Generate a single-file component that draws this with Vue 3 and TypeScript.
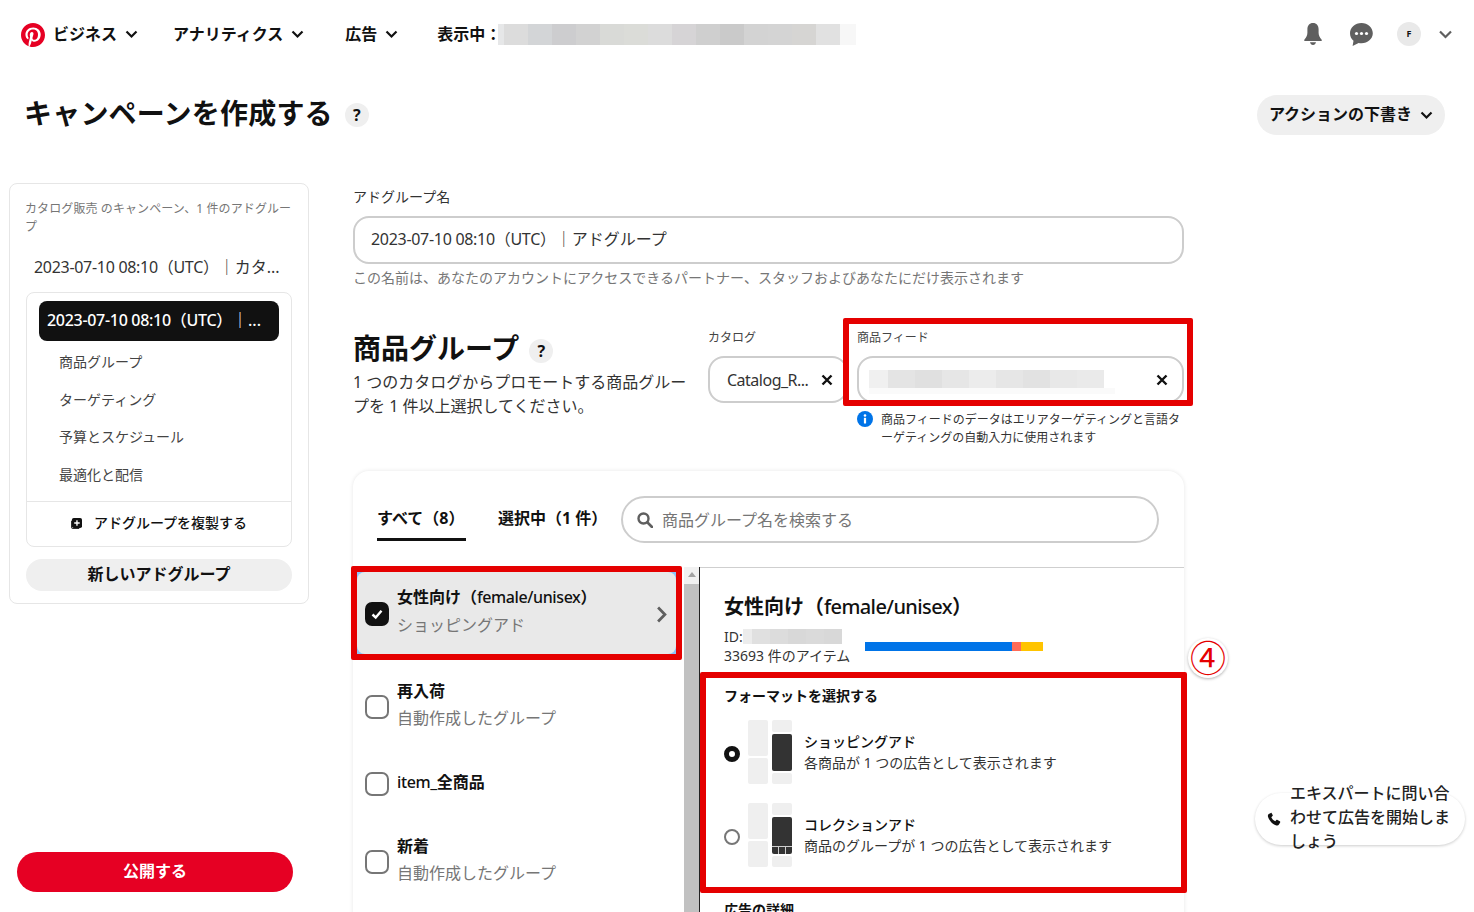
<script setup lang="ts">
const topBlur: string[] = ['#e6e7e8','#dcdcdc','#d3d5d7','#cdcdcf','#d2d2d2','#d9dad7','#dbdcd8','#dcdcdc','#d6d4d6','#cfcfcf','#cacaca','#d3d3d3','#d4d4d4','#d6d5d3','#e1e1e1','#f7f7f7']
const topWidths: number[] = [6,24,24,24,24,24,24,24,24,24,24,24,24,24,24,16]
const feedBlur: string[] = ['#f0f0f0','#e4e4e4','#e0e0e0','#e6e6e6','#ececec','#e6e6e6','#e2e2e2','#e8e8e8','#eaeaea']
const idBlur: string[] = ['#ececec','#e0e0e0','#dcdcdc','#d8d8d8','#dadada','#d8d8d8']
const navItems: { label: string; cls: string }[] = [
  { label: 'アナリティクス', cls: 'gap-a' },
  { label: '広告', cls: 'gap-b' }
]
const sideLinks: string[] = ['商品グループ', 'ターゲティング', '予算とスケジュール', '最適化と配信']
</script>

<template>
  <div class="page">
    <header class="topbar">
      <svg class="logo" viewBox="0 0 24 24"><path fill="#e60023" d="M0 12c0 5.123 3.211 9.497 7.73 11.218-.11-.937-.227-2.482.025-3.566.217-.932 1.401-5.938 1.401-5.938s-.357-.715-.357-1.774c0-1.66.962-2.9 2.161-2.9 1.02 0 1.512.765 1.512 1.682 0 1.025-.653 2.557-.99 3.978-.281 1.189.597 2.159 1.769 2.159 2.123 0 3.756-2.239 3.756-5.471 0-2.861-2.056-4.86-4.991-4.86-3.398 0-5.393 2.549-5.393 5.184 0 1.027.395 2.127.889 2.726a.36.36 0 0 1 .083.343c-.091.378-.293 1.189-.332 1.355-.053.218-.173.265-.4.159-1.492-.694-2.424-2.875-2.424-4.627 0-3.769 2.737-7.229 7.892-7.229 4.144 0 7.365 2.953 7.365 6.899 0 4.117-2.595 7.431-6.199 7.431-1.211 0-2.348-.63-2.738-1.373 0 0-.599 2.282-.744 2.84-.282 1.084-1.064 2.456-1.549 3.235C9.584 23.815 10.77 24 12 24c6.627 0 12-5.373 12-12S18.627 0 12 0 0 5.373 0 12"/></svg>
      <div class="nav-item">
        <span>ビジネス</span>
        <svg class="chev" viewBox="0 0 13 9"><path d="M1.5 1.5 6.5 6.5 11.5 1.5" /></svg>
      </div>
      <div v-for="n in navItems" :key="n.label" class="nav-item" :class="n.cls">
        <span>{{ n.label }}</span>
        <svg class="chev" viewBox="0 0 13 9"><path d="M1.5 1.5 6.5 6.5 11.5 1.5" /></svg>
      </div>
      <div class="nav-item gap-c"><span>表示中：</span></div>
      <div class="blur-top">
        <i v-for="(c, i) in topBlur" :key="i" :style="{ background: c, width: topWidths[i] + 'px' }"></i>
      </div>
      <div class="top-right">
        <svg class="ic" viewBox="0 0 24 24"><path fill="#5f5f5f" d="M12 1c-3.6 0-5.6 2.7-5.6 6.2v3.6c0 2.6-1 4.5-3.1 7V19h17.400v-1.200c-2.100-2.500-3.100-4.400-3.100-7V7.200C17.600 3.700 15.600 1 12 1ZM9 20.300c.3 1.600 1.500 2.700 3 2.700s2.700-1.100 3-2.700H9Z"/></svg>
        <svg class="ic" viewBox="0 0 24 24"><path fill="#5f5f5f" d="M12.500 1C6.100 1 1 5.600 1 11.300c0 3 1.300 5.600 3.500 7.500L3.600 24l6-3c.9.200 1.900.3 2.900.3 6.200 0 11.300-4.500 11.300-10S18.700 1 12.500 1Z"/><circle cx="7.500" cy="11.500" r="1.600" fill="#fff"/><circle cx="12.500" cy="11.500" r="1.600" fill="#fff"/><circle cx="17.500" cy="11.500" r="1.600" fill="#fff"/></svg>
        <div class="avatar">F</div>
        <svg class="chev grey" viewBox="0 0 13 9"><path d="M1 1.500 6.500 7 12 1.500" /></svg>
      </div>
    </header>

    <div class="title-row">
      <h1>キャンペーンを作成する</h1>
      <span class="help">?</span>
      <button class="draft">
        <span class="btn-label">アクションの下書き</span>
        <svg class="chev" viewBox="0 0 13 9"><path d="M1.500 1.500 6.500 6.500 11.500 1.500" /></svg>
      </button>
    </div>

    <div class="body">
      <aside class="side">
        <div class="side-card">
          <p class="side-caption">カタログ販売 のキャンペーン、1 件のアドグループ</p>
          <p class="side-campaign"><span class="date">2023-07-10 08:10（UTC）</span>｜カタ...</p>
          <div class="side-box">
            <div class="side-pill"><span class="date">2023-07-10 08:10（UTC）</span>｜...</div>
            <div class="side-links">
              <div v-for="s in sideLinks" :key="s" class="side-link">{{ s }}</div>
            </div>
            <div class="side-dup">
              <svg viewBox="0 0 12 12" class="dup-ic"><path fill="#111" d="M3 0h7a2 2 0 0 1 2 2v7a2 2 0 0 1-2 2H3a2 2 0 0 1-2-2V2a2 2 0 0 1 2-2Z"/><path fill="none" stroke="#111" stroke-width="1" d="M.5 3v7a1.500 1.500 0 0 0 1.500 1.500h7"/><path stroke="#fff" stroke-width="1.500" d="M6.500 2.500v6M3.500 5.500h6"/></svg>
              <span>アドグループを複製する</span>
            </div>
          </div>
          <button class="side-new"><span class="btn-label">新しいアドグループ</span></button>
        </div>
        <button class="publish"><span class="btn-label">公開する</span></button>
      </aside>

      <main class="main">
        <label class="lbl">アドグループ名</label>
        <div class="field name-field"><span class="date">2023-07-10 08:10（UTC）</span>｜アドグループ</div>
        <p class="hint">この名前は、あなたのアカウントにアクセスできるパートナー、スタッフおよびあなたにだけ表示されます</p>

        <section class="group-row">
          <div class="group-left">
            <div class="group-head">
              <h2>商品グループ</h2>
              <span class="help low">?</span>
            </div>
            <p class="group-desc">1 つのカタログからプロモートする商品グループを 1 件以上選択してください。</p>
          </div>
          <div class="catalog">
            <div class="mini-lbl">カタログ</div>
            <div class="field select">
              <span class="cat-name">Catalog_R...</span>
              <svg class="x" viewBox="0 0 12 12"><path d="M1.500 1.500 10.500 10.500M10.500 1.500 1.500 10.500"/></svg>
            </div>
          </div>
          <div class="feed">
            <div class="mini-lbl">商品フィード</div>
            <div class="field select">
              <div class="feed-blur">
                <div class="feed-blur-main"><i v-for="(c, i) in feedBlur" :key="i" :style="{ background: c }"></i></div>
                <div class="feed-blur-sub"></div>
              </div>
              <svg class="x" viewBox="0 0 12 12"><path d="M1.500 1.500 10.500 10.500M10.500 1.500 1.500 10.500"/></svg>
            </div>
            <div class="feed-note">
              <svg class="info" viewBox="0 0 16 16"><circle cx="8" cy="8" r="8" fill="#0074e8"/><circle cx="8" cy="4.500" r="1.300" fill="#fff"/><rect x="6.900" y="6.800" width="2.200" height="5.700" rx=".6" fill="#fff"/></svg>
              <p>商品フィードのデータはエリアターゲティングと言語ターゲティングの自動入力に使用されます</p>
            </div>
          </div>
        </section>

        <section class="card">
          <div class="tabs">
            <div class="tab active">すべて（8）</div>
            <div class="tab">選択中（1 件）</div>
            <div class="search">
              <svg viewBox="0 0 16 16" class="search-ic"><circle cx="6.500" cy="6.500" r="5" fill="none" stroke="#5f5f5f" stroke-width="2.400"/><path d="M10.500 10.500 15 15" stroke="#5f5f5f" stroke-width="2.600" stroke-linecap="round"/></svg>
              <span>商品グループ名を検索する</span>
            </div>
          </div>
          <div class="panes">
            <div class="left-pane">
              <div class="list">
                <div class="row-sel">
                  <div class="row-sel-in">
                    <span class="check on"><svg viewBox="0 0 14 14"><path d="M2.500 7.500 5.700 10.500 11.500 3.800" fill="none" stroke="#fff" stroke-width="2.400"/></svg></span>
                    <div class="row-text">
                      <div class="row-name">女性向け（<span class="reg">female/unisex</span>）</div>
                      <div class="row-sub">ショッピングアド</div>
                    </div>
                    <svg class="row-chev" viewBox="0 0 10 16"><path d="M1.800 1.500 8.200 8 1.800 14.500" fill="none" stroke="#5f5f5f" stroke-width="2.600"/></svg>
                  </div>
                </div>
                <div class="row first">
                  <span class="check"></span>
                  <div class="row-text">
                    <div class="row-name">再入荷</div>
                    <div class="row-sub">自動作成したグループ</div>
                  </div>
                </div>
                <div class="row">
                  <span class="check"></span>
                  <div class="row-text"><div class="row-name"><span class="reg">item_</span>全商品</div></div>
                </div>
                <div class="row">
                  <span class="check"></span>
                  <div class="row-text">
                    <div class="row-name">新着</div>
                    <div class="row-sub">自動作成したグループ</div>
                  </div>
                </div>
              </div>
              <div class="scroll">
                <div class="scroll-up"></div>
                <div class="scroll-thumb"></div>
              </div>
            </div>
            <div class="right-pane">
              <h3>女性向け（<span class="reg">female/unisex</span>）</h3>
              <div class="meta">
                <div class="meta-text">
                  <div class="meta-id">ID:<span class="id-blur"><i v-for="(c, i) in idBlur" :key="i" :style="{ background: c }"></i></span></div>
                  <div>33693 件のアイテム</div>
                </div>
                <div class="bar"><i class="b1"></i><i class="b2"></i><i class="b3"></i></div>
              </div>
              <h4>フォーマットを選択する</h4>
              <div class="opt">
                <span class="radio on"></span>
                <div class="thumb">
                  <div class="tcol"><i class="t36"></i><i class="t25"></i></div>
                  <div class="tcol"><i class="t12"></i><i class="dark"></i><i class="t10"></i></div>
                </div>
                <div class="opt-text">
                  <div class="opt-name">ショッピングアド</div>
                  <div>各商品が 1 つの広告として表示されます</div>
                </div>
              </div>
              <div class="opt second">
                <span class="radio"></span>
                <div class="thumb">
                  <div class="tcol"><i class="t36"></i><i class="t25"></i></div>
                  <div class="tcol"><i class="t12"></i><i class="dark coll"><b></b><b></b><b></b></i><i class="t10"></i></div>
                </div>
                <div class="opt-text">
                  <div class="opt-name">コレクションアド</div>
                  <div>商品のグループが 1 つの広告として表示されます</div>
                </div>
              </div>
              <h4 class="details">広告の詳細</h4>
            </div>
          </div>
        </section>
      </main>
    </div>

    <div class="mark m-feed"></div>
    <div class="mark m-row"></div>
    <div class="mark m-format"></div>
    <div class="num">④</div>

    <div class="expert">
      <svg class="phone" viewBox="0 0 24 24"><path fill="#111" d="M6.600 1.500 3 3.500C1.500 4.500 1 6.500 2 9c2.500 6.500 7 11 13 13.500 2.500 1 4.500.5 5.500-1l2-3.500c.4-.8.2-1.500-.5-2l-4-2.500c-.7-.4-1.400-.3-2 .3l-1.800 2c-3-1.300-5.500-4-6.800-7l2-1.800c.6-.6.7-1.300.3-2L7.800 1.500c-.3-.4-.8-.4-1.200 0Z"/></svg>
      <div class="expert-text">エキスパートに問い合わせて広告を開始しましょう</div>
    </div>
  </div>
</template>

<style>
html, body { margin: 0; padding: 0; background: #fff; }
</style>

<style scoped>
.page {
  position: relative;
  width: 1474px;
  height: 912px;
  overflow: hidden;
  background: #fff;
  color: #111;
  font-family: "Noto Sans", "Noto Sans CJK JP", sans-serif;
  font-size: 14px;
  line-height: 20px;
}
p, h1, h2, h3, h4 { margin: 0; }
i { display: block; }
button { font-family: inherit; border: 0; color: #111; padding: 0; }
.btn-label { display: block; margin-top: -5px; }
.date { letter-spacing: -.3px; }

.topbar { height: 68px; display: flex; align-items: center; padding: 0 22px 0 21px; box-sizing: border-box; }
.logo { width: 24px; height: 24px; margin-right: 8px; margin-top: 1px; }
.nav-item { display: flex; align-items: center; gap: 8px; font-size: 16px; font-weight: 700; line-height: 24px; }
.gap-a { margin-left: 35px; }
.gap-b { margin-left: 41px; }
.gap-c { margin-left: 39px; }
.chev { width: 13px; height: 9px; fill: none; stroke: #111; stroke-width: 2.200; flex: none; }
.chev.grey { stroke: #5f5f5f; }
.blur-top { display: flex; height: 21px; margin: 1px 0 0 -3px; }
.top-right { margin-left: auto; display: flex; align-items: center; }
.ic { width: 24px; height: 24px; margin-right: 24px; }
.avatar { width: 24px; height: 24px; border-radius: 50%; background: #e9e9e9; font-size: 9px; font-weight: 700; text-align: center; line-height: 24px; margin-right: 18px; }

.title-row { display: flex; align-items: center; height: 40px; margin-top: 27px; padding: 0 29px 0 24px; }
h1 { font-size: 28px; line-height: 36px; font-weight: 700; margin-top: -4px; letter-spacing: .2px; }
.help { width: 24px; height: 24px; border-radius: 50%; background: #efefef; font-size: 16px; font-weight: 700; text-align: center; line-height: 24px; margin-left: 12px; flex: none; }
.draft { margin-left: auto; width: 188px; height: 40px; border-radius: 20px; background: #efefef; font-size: 16px; font-weight: 700; display: flex; align-items: center; justify-content: center; gap: 8px; }

.body { display: flex; margin-top: 48px; padding-left: 9px; height: 729px; }
.side { width: 300px; flex: none; display: flex; flex-direction: column; justify-content: space-between; padding-bottom: 20px; box-sizing: border-box; }
.side-card { border: 1px solid #e6e6e6; border-radius: 8px; padding: 16px 16px 12px 15px; height: 421px; box-sizing: border-box; }
.side-caption { font-size: 12px; line-height: 18px; color: #767676; letter-spacing: .1px; }
.side-campaign { font-size: 16px; line-height: 24px; color: #333; margin: 19px 0 13px 9px; white-space: nowrap; }
.side-box { border: 1px solid #e6e6e6; border-radius: 8px; height: 255px; box-sizing: border-box; padding-top: 8px; margin-left: 1px; }
.side-pill { margin: 0 12px; height: 40px; background: #111; color: #fff; border-radius: 8px; font-size: 16px; font-weight: 500; line-height: 39px; padding-left: 8px; white-space: nowrap; }
.side-links { margin: 2px 12px 8px 32px; }
.side-link { height: 37.500px; line-height: 37.500px; font-size: 14px; color: #444; }
.side-dup { border-top: 1px solid #e6e6e6; height: 44px; display: flex; align-items: center; justify-content: center; gap: 12px; font-size: 14px; font-weight: 500; padding-bottom: 1px; box-sizing: border-box; }
.dup-ic { width: 11px; height: 11px; }
.side-new { display: block; width: 266px; height: 32px; margin: 12px 0 0 1px; border-radius: 16px; background: #efefef; font-size: 16px; font-weight: 700; }
.publish { width: 276px; height: 40px; margin-left: 8px; border-radius: 20px; background: #e60023; color: #fff; font-size: 16px; font-weight: 700; }

.main { margin-left: 44px; width: 831px; padding-top: 4px; }
.lbl { display: block; font-size: 14px; line-height: 20px; color: #333; }
.field { border: 2px solid #cdcdcd; border-radius: 16px; box-sizing: border-box; background: #fff; font-size: 16px; color: #333; }
.name-field { margin-top: 9px; height: 48px; line-height: 42px; padding-left: 16px; }
.hint { margin-top: 4px; color: #767676; font-size: 14px; line-height: 20px; }

.group-row { display: flex; margin-top: 40px; }
.group-left { width: 355px; flex: none; }
.group-head { display: flex; align-items: center; margin-top: 2px; }
h2 { font-size: 28px; line-height: 36px; font-weight: 700; }
.help.low { margin-left: 10px; margin-top: 6px; }
.group-desc { width: 335px; margin-top: 4px; font-size: 16px; line-height: 24px; color: #333; }
.catalog { width: 140px; flex: none; margin-right: 9px; }
.feed { width: 327px; flex: none; }
.mini-lbl { font-size: 12px; line-height: 18px; color: #444; padding-top: 1px; margin-bottom: 9px; }
.select { height: 47px; display: flex; align-items: center; justify-content: space-between; padding: 0 13px 0 17px; white-space: nowrap; }
.cat-name { letter-spacing: -.5px; }
.x { width: 12px; height: 12px; fill: none; stroke: #111; stroke-width: 2.400; flex: none; }
.feed .select { padding: 0 14px 0 10px; }
.feed-blur { margin-top: 5px; }
.feed-blur-main { display: flex; width: 235px; height: 18px; }
.feed-blur-main i { flex: 1; }
.feed-blur-main i:first-child { flex: 0 0 19px; }
.feed-blur-sub { width: 246px; height: 6px; background: #fafafa; }
.feed-note { display: flex; gap: 8px; margin-top: 8px; }
.info { width: 16px; height: 16px; flex: none; }
.feed-note p { font-size: 12px; line-height: 17.500px; color: #333; }

.card { margin-top: 25px; height: 480px; border-radius: 16px 16px 0 0; box-shadow: 0 0 4px rgba(0,0,0,.1); background: #fff; overflow: hidden; }
.tabs { height: 96px; display: flex; align-items: flex-start; padding: 25px 25px 0 24px; box-sizing: border-box; }
.tab { height: 45px; font-size: 16px; font-weight: 700; line-height: 44px; box-sizing: border-box; margin-right: 32px; white-space: nowrap; }
.tab:nth-child(2) { margin-right: 0; }
.tab.active { width: 89px; border-bottom: 3px solid #111; }
.search { margin-left: auto; width: 538px; height: 47px; flex: none; border: 2px solid #cdcdcd; border-radius: 24px; box-sizing: border-box; display: flex; align-items: center; gap: 9px; padding: 1px 0 0 14px; font-size: 16px; color: #767676; }
.search-ic { width: 16px; height: 16px; flex: none; margin-top: -1px; }

.panes { display: flex; }
.left-pane { width: 347px; flex: none; display: flex; box-sizing: border-box; border-right: 1px solid #222; height: 345px; }
.list { width: 331px; flex: none; }
.row-sel { margin: 5px 8px 0 4px; height: 82px; background: #8cc4f8; }
.row-sel-in { height: 100%; background: #e9e9e9; border-radius: 8px; display: flex; align-items: center; padding: 0 9px 0 8px; box-sizing: border-box; gap: 8px; }
.row-sel .row-sub { margin-top: 4px; }
.row { height: 77.500px; display: flex; align-items: center; padding-left: 12px; gap: 8px; }
.row.first { margin-top: 14px; }
.check { width: 24px; height: 24px; border: 2px solid #767676; border-radius: 7px; box-sizing: border-box; flex: none; display: flex; align-items: center; justify-content: center; }
.check.on { background: #111; border-color: #111; margin-top: 2px; }
.check svg { width: 14px; height: 14px; }
.row-text { flex: 1; margin-bottom: 4px; }
.row-name { font-size: 16px; font-weight: 700; line-height: 24px; }
.reg { font-weight: 400; letter-spacing: -.5px; }
.row-name .reg { font-weight: 500; letter-spacing: -.4px; }
.row-sub { font-size: 16px; line-height: 24px; color: #767676; margin-top: 3px; }
.row-chev { width: 11px; height: 17px; margin-top: 2px; flex: none; }
.scroll { width: 15px; flex: none; background: #f1f1f1; }
.scroll-up { height: 17px; position: relative; }
.scroll-up::after { content: ""; position: absolute; left: 4px; top: 5px; border: 4px solid transparent; border-top: 0; border-bottom: 5px solid #a3a3a3; }
.scroll-thumb { height: 328px; background: #c1c1c1; }

.right-pane { flex: 1; border-top: 1px solid #cfcfcf; padding: 25px 0 0 24px; }
h3 { font-size: 20px; font-weight: 700; line-height: 28px; }
h3 .reg { font-weight: 500; letter-spacing: -.6px; }
.meta { display: flex; align-items: center; margin-top: 6px; font-size: 14px; line-height: 19px; color: #333; }
.meta-text { width: 141px; white-space: nowrap; }
.meta-id { display: flex; align-items: center; }
.id-blur { display: flex; width: 99px; height: 15px; }
.id-blur i { flex: 1; }
.id-blur i:first-child { flex: 0 0 9px; }
.bar { display: flex; height: 9px; width: 178px; margin-top: 1px; }
.b1 { width: 147px; background: #0074e8; }
.b2 { width: 9px; background: #ff6b57; }
.b3 { width: 22px; background: #ffc400; }
h4 { font-size: 14px; font-weight: 700; line-height: 20px; margin-top: 21px; }
.opt { display: flex; align-items: center; margin-top: 14px; height: 64px; }
.opt.second { margin-top: 19px; }
.radio { width: 16px; height: 16px; border-radius: 50%; border: 2px solid #767676; box-sizing: border-box; flex: none; margin: 4px 8px 0 0; }
.radio.on { border: 5.500px solid #111; background: #fff; }
.thumb { width: 44px; height: 64px; display: flex; gap: 4px; flex: none; margin-right: 12px; }
.tcol { width: 20px; display: flex; flex-direction: column; gap: 2px; }
.tcol i { background: #efefef; border-radius: 2px; }
.t36 { height: 36px; }
.t25 { height: 26px; }
.t12 { height: 12px; }
.t10 { height: 11px; }
.tcol .dark { height: 37px; background: #333; position: relative; }
.tcol .coll { display: flex; align-items: flex-end; overflow: hidden; }
.coll b { flex: 1; height: 8px; border-top: 1px solid #ccc; border-right: 1px solid #ccc; box-sizing: border-box; }
.coll b:last-child { border-right: 0; }
.opt-text { font-size: 14px; line-height: 21px; color: #333; }
.opt-name { font-weight: 500; color: #111; }
.details { margin-top: 33px; }

.mark { position: absolute; border: 6px solid #e50000; box-sizing: border-box; border-radius: 2px; pointer-events: none; }
.m-feed { left: 843px; top: 318px; width: 350px; height: 88px; }
.m-row { left: 351px; top: 566px; width: 331px; height: 94px; }
.m-format { left: 700px; top: 672px; width: 487px; height: 221px; }
.num { position: absolute; left: 1188px; top: 638px; width: 40px; height: 40px; border-radius: 50%; background: #fff; box-shadow: 0 1px 3px rgba(0,0,0,.3); color: #e50000; font-size: 36px; line-height: 37px; text-align: center; font-family: "Noto Sans CJK JP", sans-serif; }

.expert { position: absolute; left: 1255px; top: 793px; width: 210px; height: 52px; border-radius: 26px; background: #fff; box-shadow: 0 1px 3px rgba(0,0,0,.2); display: flex; align-items: center; padding-left: 12px; box-sizing: border-box; gap: 9px; }
.phone { width: 14px; height: 14px; flex: none; }
.expert-text { width: 162px; font-size: 16px; font-weight: 500; line-height: 24px; flex: none; color: #222; margin-top: -5px; }
</style>
